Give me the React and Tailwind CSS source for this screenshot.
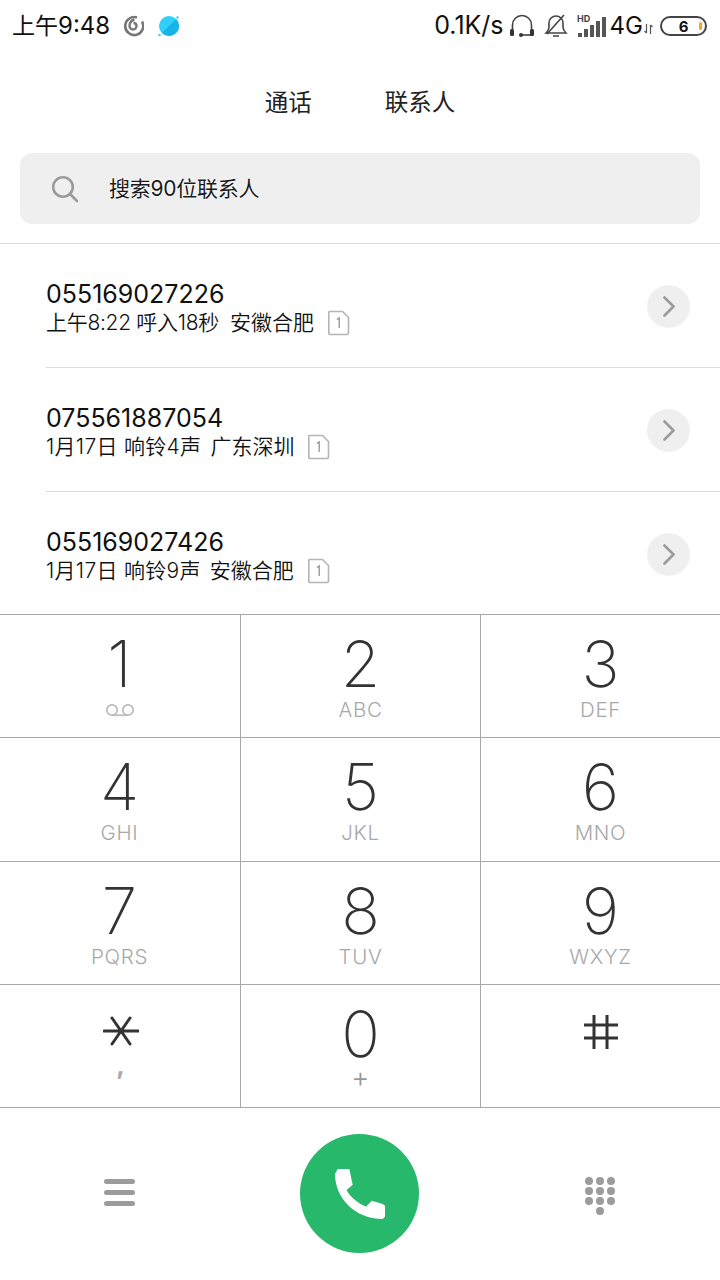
import React from "react";

const inter = "font-['Inter','Noto_Sans_CJK_SC',sans-serif]";

const calls = [
  { num: "055169027226", info: "上午8:22 呼入18秒", place: "安徽合肥", infoCls: "tracking-[-0.3px]", placeCls: "ml-[11px]" },
  { num: "075561887054", info: "1月17日 响铃4声", place: "广东深圳", infoCls: "tracking-[0.3px]", placeCls: "ml-[9px]" },
  { num: "055169027426", info: "1月17日 响铃9声", place: "安徽合肥", infoCls: "tracking-[0.3px]", placeCls: "ml-[9px]" },
];

const keys = [
  { d: "1", voicemail: true },
  { d: "2", s: "ABC" },
  { d: "3", s: "DEF" },
  { d: "4", s: "GHI" },
  { d: "5", s: "JKL" },
  { d: "6", s: "MNO" },
  { d: "7", s: "PQRS" },
  { d: "8", s: "TUV" },
  { d: "9", s: "WXYZ" },
  { star: true, s: "," },
  { d: "0", s: "+" },
  { hash: true },
];

const Sim = () => (
  <svg width="22" height="26" viewBox="0 0 22 26" fill="none">
    <path d="M2 1.500h12.500l6 6V23a1.500 1.500 0 0 1-1.500 1.500H2A1.500 1.500 0 0 1 .8 23V2.500A1 1 0 0 1 2 1.500z" stroke="#b5b5b5" strokeWidth="1.600" />
    <path d="M9 9.500l2.200-1.500v10" stroke="#8a8a8a" strokeWidth="1.200" />
  </svg>
);

const CallRow = ({ num, info, place, infoCls, placeCls, last }) => (
  <div className={`ml-[46px] flex items-center justify-between pr-[30px] ${last ? "h-[122px]" : "h-[124px] border-b border-[#dcdcdc]"}`}>
    <div className={last ? "pt-[7px]" : "pt-[5px]"}>
      <div className="h-[29px] text-[25px] font-normal leading-[30px] text-[#111]">{num}</div>
      <div className="flex items-center text-[21px] font-[350] leading-[30px] text-[#111]">
        <span className={infoCls}>{info}</span>
        <span className={placeCls}>{place}</span>
        <span className="ml-[14px] flex"><Sim /></span>
      </div>
    </div>
    <div className="mt-[2px] flex h-[43px] w-[43px] items-center justify-center rounded-full bg-[#efefef] pl-[1px]">
      <svg width="12" height="21" viewBox="0 0 12 21" fill="none">
        <path d="M1.500 1.500l9 9-9 9" stroke="#9b9b9b" strokeWidth="2.600" strokeLinecap="round" strokeLinejoin="round" />
      </svg>
    </div>
  </div>
);

const Key = ({ k, i }) => (
  <div className={`flex h-[123.25px] flex-col items-center border-b border-[#a8a8a8] ${i % 3 === 0 ? "pr-[1px]" : ""} ${i % 3 !== 2 ? "border-r" : ""}`}>
    {k.star ? (
      <svg className="ml-[2px] mt-[30px]" width="36" height="32" viewBox="0 0 36 32" fill="none">
        <path d="M1 16h34M9 3l18 26M27 3L9 29" stroke="#333" strokeWidth="3" strokeLinecap="round" />
      </svg>
    ) : k.hash ? (
      <svg className="mt-[30px]" width="34" height="34" viewBox="0 0 34 34" fill="none">
        <path d="M0 10h34M0 23h34M10 0v34M23 0v34" stroke="#333" strokeWidth="3" />
      </svg>
    ) : (
      <div className="mt-[17px] h-[64px] text-[64px] font-extralight leading-[64px] text-[#333]">{k.d}</div>
    )}
    {k.voicemail ? (
      <svg className="mt-[7px]" width="30" height="14" viewBox="0 0 30 14" fill="none">
        <circle cx="7" cy="7" r="5.200" stroke="#bdbdbd" strokeWidth="1.800" />
        <circle cx="23" cy="7" r="5.200" stroke="#bdbdbd" strokeWidth="1.800" />
        <path d="M7 12.200h16" stroke="#bdbdbd" strokeWidth="1.800" />
      </svg>
    ) : k.star ? (
      <div className="ml-[2px] mt-[6px] text-[26px] font-bold leading-[24px] text-[#a8a8a8]">{k.s}</div>
    ) : k.s === "+" ? (
      <div className="-mt-[1px] text-[28px] font-light leading-[24px] text-[#999]">{k.s}</div>
    ) : k.s ? (
      <div className="mt-[2px] text-[20.5px] font-light leading-[24px] tracking-[0.7px] text-[#a8a8a8]">{k.s}</div>
    ) : null}
  </div>
);

export default function App() {
  return (
    <div className={`flex h-[1280px] w-[720px] flex-col overflow-hidden bg-white ${inter}`}>
      {/* status bar */}
      <div className="flex h-[52px] items-center justify-between pl-[12px] pr-[13px] text-[24px] text-[#111]">
        <div className="flex items-center">
          <span><span className="text-[23px]">上午</span>9:48</span>
          <svg className="ml-[12px]" width="22" height="24" viewBox="0 0 22 24" fill="none">
            <path d="M15 3.500a9 9 0 1 0 5 4" stroke="#777" strokeWidth="2.600" />
            <path d="M12.500 5.500c-3 .8-5 3-5 6.500a3.500 3.500 0 0 0 7 0c0-2-1-3-3-3" stroke="#777" strokeWidth="2.400" />
          </svg>
          <svg className="ml-[14px]" width="22" height="24" viewBox="0 0 22 24">
            <circle cx="11" cy="12" r="10" fill="#2fd0fb" />
            <path d="M18.100 4.900A10 10 0 0 1 3.900 19.100z" fill="#17b4e6" />
            <circle cx="19.500" cy="3.500" r="1.200" fill="#2fd0fb" />
            <circle cx="1.500" cy="21" r="1.200" fill="#2fd0fb" />
          </svg>
        </div>
        <div className="flex items-center">
          <span className="text-[25px]">0.1K/s</span>
          <svg className="ml-[5px]" width="26" height="24" viewBox="0 0 26 24" fill="none">
            <path d="M3.500 18V11a9.500 9.500 0 0 1 19 0v7" stroke="#444" strokeWidth="1.600" />
            <rect x="1" y="15" width="4" height="7" rx="1.500" fill="#333" />
            <rect x="21" y="15" width="4" height="7" rx="1.500" fill="#333" />
            <path d="M22 21h-9" stroke="#333" strokeWidth="1.500" />
            <circle cx="12" cy="21" r="2" fill="#333" />
          </svg>
          <svg className="ml-[9px]" width="24" height="24" viewBox="0 0 24 24" fill="none">
            <path d="M2 19h20c-2-2-3-3-3-6V9a7 7 0 0 0-7-7 7 7 0 0 0-7 7v4c0 3-1 4-3 6z" stroke="#444" strokeWidth="1.600" />
            <path d="M9 22h6M3 20L20 1" stroke="#444" strokeWidth="1.600" />
          </svg>
          <svg className="ml-[9px]" width="30" height="24" viewBox="0 0 30 24">
            <text x="0" y="8" fontSize="9" fontWeight="700" fill="#444" fontFamily="Inter">HD</text>
            <rect x="1" y="19" width="4" height="4" fill="#555" />
            <rect x="7" y="15" width="4" height="8" fill="#555" />
            <rect x="13" y="11" width="4" height="12" fill="#555" />
            <rect x="19" y="7" width="4" height="16" fill="#555" />
            <rect x="25" y="3" width="4" height="20" fill="#555" />
          </svg>
          <span className="ml-[3px]">4G</span>
          <svg className="ml-[1px] mt-[6px]" width="9" height="10" viewBox="0 0 9 10" fill="none">
            <path d="M2.500 0v9M0.500 7l2 2M6.500 10V1M8.500 3l-2-2" stroke="#555" strokeWidth="1.200" />
          </svg>
          <div className="relative ml-[7px] flex h-[20px] w-[47px] items-center justify-center rounded-full border-2 border-[#444] text-[15px] font-bold leading-none">
            6
            <span className="absolute right-[3px] top-[4px] h-[8px] w-[3px] rounded-full bg-[#f5a623]" />
          </div>
        </div>
      </div>

      {/* tabs */}
      <div className="flex h-[101px] items-start justify-center gap-[73px] pt-[36px] text-[23.5px] leading-[30px] text-[#222]">
        <span>通话</span>
        <span>联系人</span>
      </div>

      {/* search */}
      <div className="mx-[20px] flex h-[71px] items-center rounded-[12px] bg-[#efefef] pl-[31px]">
        <svg width="28" height="28" viewBox="0 0 28 28" fill="none">
          <circle cx="12" cy="12" r="9.800" stroke="#9a9a9a" strokeWidth="2.600" />
          <path d="M19 19l7 7" stroke="#9a9a9a" strokeWidth="2.600" strokeLinecap="round" />
        </svg>
        <span className="ml-[30px] pt-[1px] text-[21px] tracking-[-0.25px] text-[#1a1a1a] [text-shadow:0_0_2px_#fff,0_0_2px_#fff]">搜索90位联系人</span>
      </div>

      <div className="mt-[19px] border-t border-[#dcdcdc]">
        {calls.map((c, i) => (
          <CallRow key={c.num} {...c} last={i === calls.length - 1} />
        ))}
      </div>

      {/* keypad */}
      <div className="grid grid-cols-[241px_240px_239px] border-t border-[#a8a8a8]">
        {keys.map((k, i) => (
          <Key key={i} k={k} i={i} />
        ))}
      </div>

      {/* bottom actions */}
      <div className="grid flex-1 grid-cols-3 items-center pb-[2px]">
        <div className="flex flex-col items-center gap-[6px] pb-[2px] pr-[1px]">
          <span className="h-[5px] w-[31px] rounded-full bg-[#9b9b9b]" />
          <span className="h-[5px] w-[31px] rounded-full bg-[#9b9b9b]" />
          <span className="h-[5px] w-[31px] rounded-full bg-[#9b9b9b]" />
        </div>
        <div className="flex justify-center pr-[1px]">
          <div className="flex h-[119px] w-[119px] items-center justify-center rounded-full bg-[#27b86b]">
            <svg width="50" height="51" viewBox="0 0 150 153">
              <path d="M8 3H43L53 50 35 66C45 88 70 106 93 116L110 98 143 108 150 113V146L143 153C60 153 0 90 0 18z" fill="#fff" />
            </svg>
          </div>
        </div>
        <div className="flex justify-center pt-[6px]">
          <div className="grid w-[30px] grid-cols-3 gap-x-[3px] gap-y-[2px]">
            {[0, 1, 2, 3, 4, 5, 6, 7, 8].map((n) => (
              <span key={n} className="h-[8px] w-[8px] rounded-full bg-[#9b9b9b]" />
            ))}
            <span className="col-start-2 h-[8px] w-[8px] rounded-full bg-[#9b9b9b]" />
          </div>
        </div>
      </div>
    </div>
  );
}
